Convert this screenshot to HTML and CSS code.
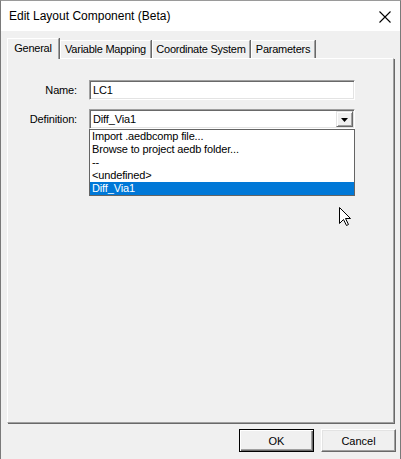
FILE: index.html
```html
<!DOCTYPE html>
<html>
<head>
<meta charset="utf-8">
<link rel="stylesheet" href="styles.css">
</head>
<body>
<div class="window">
  <div class="titlebar">
    <span class="title">Edit Layout Component (Beta)</span>
    <svg class="close" width="12" height="12" viewBox="0 0 12 12"><path d="M0.5 0.5 L11.5 11.5 M11.5 0.5 L0.5 11.5" stroke="#000" stroke-width="1.1" fill="none"/></svg>
  </div>
  <div class="client">
    <div class="tabs">
      <div class="tab active t-general">General</div>
      <div class="tab t-var">Variable Mapping</div>
      <div class="tab t-coord">Coordinate System</div>
      <div class="tab t-param">Parameters</div>
    </div>
    <div class="panel">
      <div class="form">
        <label class="lbl">Name:</label>
        <div class="edit">LC1</div>
        <label class="lbl">Definition:</label>
        <div class="combo">
          <span class="combo-text">Diff_Via1</span>
          <span class="drop-btn"><svg width="7" height="4" viewBox="0 0 7 4"><path d="M0 0 H7 L3.5 4 Z" fill="#000"/></svg></span>
          <ul class="droplist">
            <li>Import .aedbcomp file...</li>
            <li>Browse to project aedb folder...</li>
            <li>--</li>
            <li>&lt;undefined&gt;</li>
            <li class="sel">Diff_Via1</li>
          </ul>
        </div>
      </div>
      <svg class="cursor" width="13" height="20" viewBox="0 0 13 20"><path d="M0.5 0.5 L0.5 16.5 L4.5 12.5 L7.5 18.5 L9.5 17.5 L6.5 11.5 L11.5 11.5 Z" fill="#fff" stroke="#000" stroke-width="1" stroke-linejoin="miter"/></svg>
    </div>
    <div class="buttons">
      <button class="btn default">OK</button>
      <button class="btn">Cancel</button>
    </div>
  </div>
</div>
</body>
</html>
```

FILE: styles.css
```css
* { box-sizing: border-box; }
html, body { margin: 0; padding: 0; }
body {
  width: 401px;
  height: 459px;
  overflow: hidden;
  font-family: "Liberation Sans", Arial, sans-serif;
  font-size: 11px;
  letter-spacing: -0.15px;
  color: #000;
}
.window {
  width: 401px;
  height: 459px;
  display: flex;
  flex-direction: column;
  border-left: 1px solid #7a7a7a;
  border-right: 1px solid #7a7a7a;
  border-top: 1px solid #9a9a9a;
  background: #f0f0f0;
}
.titlebar {
  height: 30px;
  background: #fff;
  display: flex;
  align-items: center;
  justify-content: space-between;
  padding: 0 9px 0 8px;
}
.title {
  font-size: 12px;
  letter-spacing: 0;
  color: #000;
  padding-bottom: 1px;
}
.close { display: block; margin-top: 1px; }
.client {
  flex: 1;
  display: flex;
  flex-direction: column;
  padding: 7px 5px 0 6px;
}
.tabs {
  display: flex;
  align-items: flex-end;
  height: 20px;
  padding-left: 1px;
  position: relative;
  z-index: 2;
}
.tab {
  height: 18px;
  padding: 0;
  text-align: center;
  line-height: 17px;
  border-top: 1px solid #fff;
  border-left: 1px solid #fff;
  border-right: 1px solid #a0a0a0;
  box-shadow: 1px 0 0 #696969;
  margin-right: 1px;
  background: #f0f0f0;
  white-space: nowrap;
  letter-spacing: -0.25px;
}
.t-general { width: 52px; }
.t-var { width: 91px; }
.t-coord { width: 98px; }
.t-param { width: 64px; }
.tab.active {
  height: 21px;
  margin-bottom: -1px;
  line-height: 19px;
  margin-left: -1px;
  margin-right: 1px;
}
.panel {
  position: relative;
  height: 365px;
  border-top: 1px solid #fff;
  border-left: 1px solid #fff;
  border-right: 1px solid #a0a0a0;
  border-bottom: 1px solid #a0a0a0;
  box-shadow: 1px 1px 0 #696969;
  margin-right: 1px;
}
.form {
  display: grid;
  grid-template-columns: 69px 266px;
  column-gap: 12px;
  row-gap: 9px;
  padding-top: 21px;
  align-items: center;
}
.lbl {
  text-align: right;
}
.edit, .combo {
  height: 20px;
  background: #fff;
  border-top: 1px solid #a0a0a0;
  border-left: 1px solid #a0a0a0;
  border-right: 1px solid #fff;
  border-bottom: 1px solid #fff;
  box-shadow: inset 1px 1px 0 #696969, inset -1px -1px 0 #e3e3e3;
  padding: 3px 0 0 3px;
  line-height: 13px;
}
.combo {
  position: relative;
}
.drop-btn {
  position: absolute;
  right: 1px;
  top: 1px;
  width: 17px;
  height: 16px;
  background: #f0f0f0;
  border-top: 1px solid #e3e3e3;
  border-left: 1px solid #e3e3e3;
  border-right: 1px solid #696969;
  border-bottom: 1px solid #696969;
  box-shadow: inset 1px 1px 0 #fff, inset -1px -1px 0 #a0a0a0;
  display: flex;
  align-items: center;
  justify-content: center;
}
.drop-btn svg { display: block; margin-top: 1px; }
.droplist {
  position: absolute;
  left: -1px;
  top: 19px;
  width: 266px;
  margin: 0;
  padding: 0;
  list-style: none;
  background: #fff;
  border: 1px solid #646464;
  z-index: 5;
}
.droplist li {
  height: 13px;
  line-height: 13px;
  padding-left: 2px;
  white-space: nowrap;
}
.droplist li.sel {
  background: #0078d7;
  color: #fff;
}
.cursor {
  position: absolute;
  left: 331px;
  top: 148px;
}
.buttons {
  display: flex;
  justify-content: flex-end;
  gap: 7px;
  padding-top: 6px;
  margin-right: -1px;
}
.btn {
  width: 75px;
  height: 23px;
  font-family: "Liberation Sans", Arial, sans-serif;
  font-size: 11px;
  color: #000;
  background: #f0f0f0;
  border-top: 1px solid #fff;
  border-left: 1px solid #fff;
  border-right: 1px solid #696969;
  border-bottom: 1px solid #696969;
  box-shadow: inset -1px -1px 0 #a0a0a0, inset 1px 1px 0 #e3e3e3;
  padding: 0;
}
.btn.default {
  border: 1px solid #000;
  box-shadow: inset 1px 1px 0 #fff, inset -1px -1px 0 #696969, inset -2px -2px 0 #a0a0a0;
}
```
